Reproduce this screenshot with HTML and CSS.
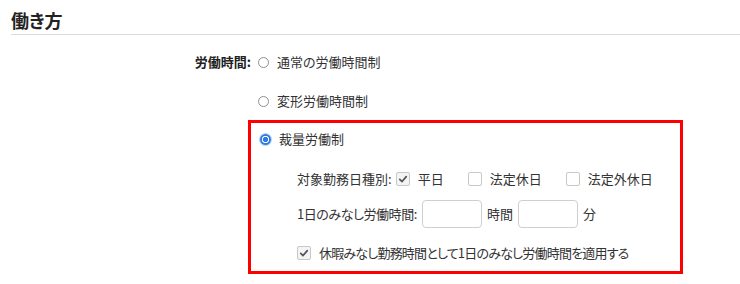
FILE: index.html
```html
<!DOCTYPE html>
<html lang="ja">
<head>
<meta charset="utf-8">
<link rel="stylesheet" href="styles.css">
</head>
<body>
<div class="page">
  <h2 class="section-title">働き方</h2>
  <div class="form">
    <div class="field-label">労働時間:</div>
    <div class="field-body">
      <div class="option"><span class="radio"></span><span>通常の労働時間制</span></div>
      <div class="option"><span class="radio"></span><span>変形労働時間制</span></div>
      <div class="highlight">
        <div class="option option-in"><span class="radio checked"></span><span>裁量労働制</span></div>
        <div class="sub">
          <div class="sub-row row-days">
            <span class="sub-label">対象勤務日種別:</span>
            <span class="check-item"><span class="checkbox checked"><svg viewBox="0 0 14 14"><path d="M3.2 7.4 L5.9 10 L10.8 4.2" /></svg></span><span>平日</span></span>
            <span class="check-item"><span class="checkbox"></span><span>法定休日</span></span>
            <span class="check-item"><span class="checkbox"></span><span>法定外休日</span></span>
          </div>
          <div class="sub-row row-hours">
            <span class="sub-label kana-tight">1日のみなし労働時間:</span>
            <span class="text-input"></span>
            <span>時間</span>
            <span class="text-input"></span>
            <span>分</span>
          </div>
          <div class="sub-row row-apply">
            <span class="checkbox checked"><svg viewBox="0 0 14 14"><path d="M3.2 7.4 L5.9 10 L10.8 4.2" /></svg></span>
            <span class="kana-tighter">休暇みなし勤務時間として1日のみなし労働時間を適用する</span>
          </div>
        </div>
      </div>
    </div>
  </div>
</div>
</body>
</html>
```
FILE: styles.css
```css
html, body {
  margin: 0;
  padding: 0;
  background: #fff;
}
body {
  font-family: "Noto Sans CJK JP", "Noto Sans", sans-serif;
  font-feature-settings: "palt";
  font-size: 13px;
  color: #333;
}
.page {
  padding-left: 11px;
  width: 729px;
}
.section-title {
  margin: 8px 0 0 0;
  font-size: 18px;
  line-height: 24px;
  font-weight: bold;
  color: #222;
  padding-bottom: 2px;
  border-bottom: 1px solid #dcdcdc;
}
.form {
  display: grid;
  grid-template-columns: 237px auto;
  margin-top: 17px;
}
.field-label {
  font-weight: bold;
  color: #222;
  text-align: right;
  line-height: 20px;
  height: 20px;
  margin-right: -3px;
  white-space: nowrap;
}
.field-body {
  display: flex;
  flex-direction: column;
  align-items: flex-start;
}
.option {
  display: flex;
  align-items: center;
  gap: 8px;
  height: 20px;
  line-height: 20px;
  margin-left: 10px;
  margin-bottom: 19px;
  white-space: nowrap;
}
.option-in {
  margin: 0 0 0 0;
}
.radio {
  width: 11px;
  height: 11px;
  border: 1px solid #8f8f8f;
  border-radius: 50%;
  box-sizing: border-box;
  background: #fff;
  flex: none;
}
.radio.checked {
  border: none;
  background: radial-gradient(circle, #2f7be0 0 2.4px, #fff 2.9px 3.4px, #2f7be0 3.9px);
  box-shadow: 0 0 0 1px #b7d2f5;
}
.highlight {
  margin-top: -10px;
  width: 435px;
  height: 154px;
  box-sizing: border-box;
  border: 3px solid #ff0000;
  padding: 6px 9px 8px 9px;
}
.sub {
  padding-left: 37px;
  display: flex;
  flex-direction: column;
}
.sub-row {
  display: flex;
  align-items: center;
  line-height: 20px;
  white-space: nowrap;
}
.sub-row > * {
  flex: none;
}
.kana-tight {
  letter-spacing: -0.45px;
}
.kana-tighter {
  letter-spacing: -0.8px;
}
.row-days {
  margin-top: 20px;
  height: 20px;
  gap: 4px;
}
.check-item {
  display: flex;
  align-items: center;
  gap: 8px;
  margin-right: 20px;
}
.check-item:last-child {
  margin-right: 0;
}
.row-hours {
  margin-top: 11px;
  height: 28px;
  gap: 5px;
}
.row-apply {
  margin-top: 15px;
  height: 20px;
  gap: 8px;
}
.checkbox {
  width: 14px;
  height: 14px;
  box-sizing: border-box;
  border: 1px solid #c8c8c8;
  border-radius: 2px;
  background: #fff;
  flex: none;
  display: block;
}
.checkbox.checked {
  background: #f4f4f4;
}
.checkbox svg {
  display: block;
  width: 12px;
  height: 12px;
}
.checkbox path {
  fill: none;
  stroke: #555;
  stroke-width: 2;
  stroke-linecap: round;
  stroke-linejoin: round;
}
.text-input {
  width: 60px;
  height: 28px;
  box-sizing: border-box;
  border: 1px solid #cfcfcf;
  border-radius: 4px;
  background: #fff;
  display: block;
}
```
